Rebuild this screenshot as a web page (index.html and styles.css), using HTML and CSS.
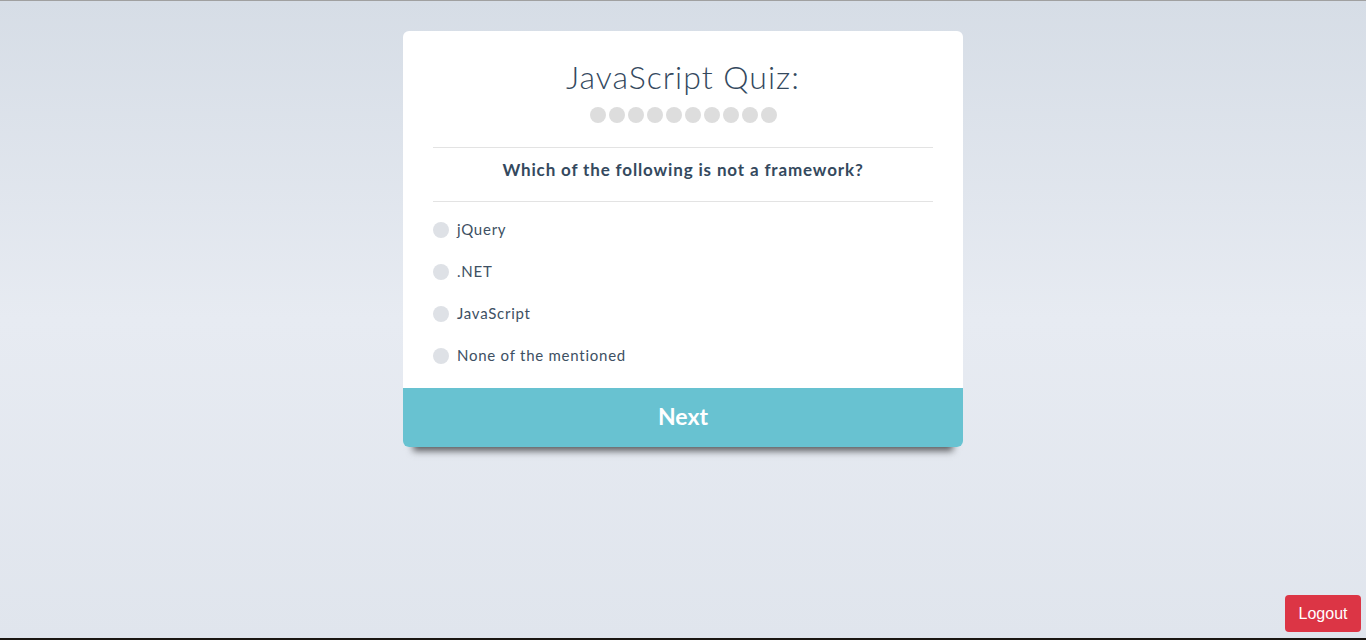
FILE: index.html
```html
<!DOCTYPE html>
<html>
<head>
<meta charset="utf-8">
<link rel="stylesheet" href="styles.css">
</head>
<body>
<div class="page">
  <div class="quiz">
    <div class="quiz-head">
      <h1 class="title">JavaScript Quiz:</h1>
      <div class="dots">
        <span class="dot"></span><span class="dot"></span><span class="dot"></span><span class="dot"></span><span class="dot"></span><span class="dot"></span><span class="dot"></span><span class="dot"></span><span class="dot"></span><span class="dot"></span>
      </div>
    </div>
    <div class="question">Which of the following is not a framework?</div>
    <ul class="options">
      <li class="option"><span class="radio"></span>jQuery</li>
      <li class="option"><span class="radio"></span>.NET</li>
      <li class="option"><span class="radio"></span>JavaScript</li>
      <li class="option"><span class="radio"></span>None of the mentioned</li>
    </ul>
    <button class="next">Next</button>
  </div>
  <div class="footer">
    <button class="logout">Logout</button>
  </div>
</div>
</body>
</html>
```
FILE: styles.css
```css
html, body {
  margin: 0;
  padding: 0;
}
body {
  height: 640px;
  overflow: hidden;
  font-family: Lato, "Open Sans", sans-serif;
}
.page {
  box-sizing: border-box;
  height: 640px;
  border-top: 1px solid #a0a0a0;
  border-bottom: 2px solid #1a1612;
  background: linear-gradient(180deg, #d6dde6 0%, #e7ebf2 50%, #e0e5ed 100%);
  display: flex;
  flex-direction: column;
  align-items: center;
  padding-top: 30px;
}
.quiz {
  width: 560px;
  background: #fff;
  border-radius: 6px;
  box-shadow: 0 14px 7px -10px rgba(0, 0, 0, 0.6);
  display: flex;
  flex-direction: column;
}
.quiz-head {
  margin: 0 30px;
  padding-top: 26px;
  padding-bottom: 24px;
  border-bottom: 1px solid #e3e3e3;
  display: flex;
  flex-direction: column;
  align-items: center;
}
.title {
  margin: 0;
  font-size: 32px;
  font-weight: 300;
  color: #34495e;
  line-height: 40px;
  letter-spacing: 1px;
}
.dots {
  display: flex;
  gap: 3px;
  margin-top: 10px;
}
.dot {
  width: 16px;
  height: 16px;
  border-radius: 50%;
  background: #dddddd;
}
.question {
  margin: 0 30px;
  padding: 9px 0 19px;
  border-bottom: 1px solid #e3e3e3;
  text-align: center;
  font-size: 17px;
  font-weight: 700;
  color: #34495e;
  line-height: 25px;
  letter-spacing: 0.85px;
}
.options {
  list-style: none;
  margin: 0;
  padding: 6px 30px 12px;
}
.option {
  display: flex;
  align-items: center;
  height: 42px;
  font-size: 15px;
  color: #3d5063;
  letter-spacing: 0.75px;
}
.radio {
  width: 16px;
  height: 16px;
  border-radius: 50%;
  background: #dee1e6;
  margin-right: 8px;
  margin-top: 2px;
}
.next {
  border: 0;
  height: 59px;
  background: #68c2d1;
  color: #fff;
  font-family: Lato, "Open Sans", sans-serif;
  font-size: 23px;
  font-weight: 700;
  border-radius: 0 0 6px 6px;
  padding: 0 0 4px;
  cursor: pointer;
}
.footer {
  margin-top: auto;
  align-self: stretch;
  display: flex;
  justify-content: flex-end;
  padding: 0 5px 6px 0;
}
.logout {
  border: 0;
  background: #dc3545;
  color: #fff;
  font-family: "Liberation Sans", Arial, sans-serif;
  font-size: 16px;
  padding: 0 12px;
  height: 37px;
  width: 76px;
  border-radius: 4px;
}
```
